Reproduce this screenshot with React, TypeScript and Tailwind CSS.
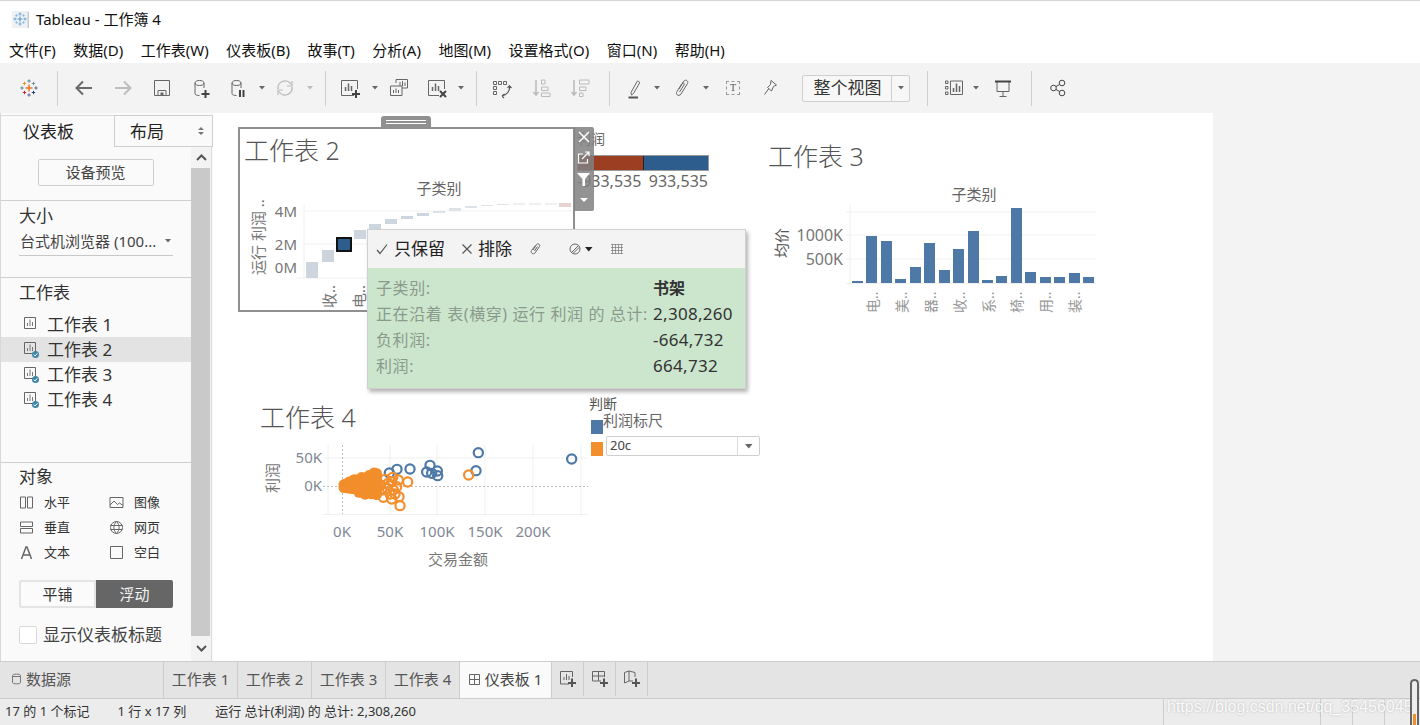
import React from "react";

const menus = ["文件(F)", "数据(D)", "工作表(W)", "仪表板(B)", "故事(T)", "分析(A)", "地图(M)", "设置格式(O)", "窗口(N)", "帮助(H)"];

function Cross({ x, y, s, c, w = 1.2 }: { x: number; y: number; s: number; c: string; w?: number }) {
    return (
        <path d={`M${x - s} ${y}H${x + s}M${x} ${y - s}V${y + s}`} stroke={c} strokeWidth={w} fill="none" />
    );
}

function TableauLogo() {
    return (
        <svg width="24" height="24" viewBox="0 0 24 24" className="shrink-0">
            <Cross x={12} y={12} s={3.5} c="#e8762b" w={1.5} />
            <Cross x={12} y={5} s={1.7} c="#5b879b" w={1} />
            <Cross x={12} y={19} s={1.7} c="#5b6591" w={1} />
            <Cross x={5} y={12} s={1.7} c="#59879b" w={1} />
            <Cross x={19} y={12} s={1.7} c="#5b6591" w={1} />
            <Cross x={7.5} y={7.5} s={1.7} c="#eb912b" w={1} />
            <Cross x={16.5} y={7.5} s={1.7} c="#7099a6" w={1} />
            <Cross x={7.5} y={16.5} s={1.7} c="#c72035" w={1} />
            <Cross x={16.5} y={16.5} s={1.7} c="#1f447e" w={1} />
        </svg>
    );
}

function TitleIcon() {
    return (
        <svg width="17" height="17" viewBox="0 0 17 17" className="shrink-0">
            <rect width="17" height="17" fill="#eef1f4" />
            <rect x="15.5" y="1" width="1.5" height="16" fill="#c9c9c9" />
            <Cross x={8} y={8} s={2.5} c="#5b9bd0" />
            <Cross x={8} y={3} s={1.6} c="#6fa8d8" w={1} />
            <Cross x={8} y={13} s={1.6} c="#6fa8d8" w={1} />
            <Cross x={3} y={8} s={1.6} c="#6fa8d8" w={1} />
            <Cross x={13} y={8} s={1.6} c="#6fa8d8" w={1} />
            <Cross x={4.5} y={4.5} s={1.3} c="#8dbbe0" w={0.9} />
            <Cross x={11.5} y={4.5} s={1.3} c="#8dbbe0" w={0.9} />
            <Cross x={4.5} y={11.5} s={1.3} c="#8dbbe0" w={0.9} />
            <Cross x={11.5} y={11.5} s={1.3} c="#8dbbe0" w={0.9} />
        </svg>
    );
}

function Caret({ className, color = "#666" }: { className?: string; color?: string }) {
    return (
        <svg width="8" height="24" viewBox="0 0 8 24" className={`shrink-0 ${className ?? ""}`}>
            <path d="M1 10H7L4 13.5Z" fill={color} />
        </svg>
    );
}

function Sep({ className }: { className: string }) {
    return <div className={`w-px h-[35px] bg-[#cfcfcf] shrink-0 ${className}`} />;
}

function Icon({ className, children }: { className: string; children: React.ReactNode }) {
    return (
        <svg width="24" height="24" viewBox="0 0 24 24" fill="none" stroke="#666" className={`shrink-0 ${className}`}>
            {children}
        </svg>
    );
}

function Toolbar() {
    return (
        <div className="h-[50px] bg-[#f3f3f3] flex items-center pl-[17px] shrink-0">
            <TableauLogo />
            <Sep className="ml-[16px]" />
            <Icon className="ml-[14px]">
                <path d="M20 12H5M11 5.5L4.5 12L11 18.5" strokeWidth="2" stroke="#6a6a6a" />
            </Icon>
            <Icon className="ml-[15px]">
                <path d="M4 12H19M13 5.5L19.5 12L13 18.5" strokeWidth="2" stroke="#bdbdbd" />
            </Icon>
            <Icon className="ml-[15px]">
                <path d="M4.5 4.5H19.5V19.5H4.5ZM8 19.5V14.5H16V19.5" strokeWidth="1" />
                <path d="M10.5 16.5H13.5V19H10.5Z" fill="#666" stroke="none" />
            </Icon>
            <Icon className="ml-[15px]">
                <path d="M6 7V17.5C6 19 8 19.5 10.5 19.5M6 7C6 5.2 8.5 4.5 10.5 4.5S15 5.2 15 7V12M6 7C6 8.8 8.5 9.5 10.5 9.5S15 8.8 15 7" strokeWidth="1" />
                <path d="M16.5 14V22M12.5 18H20.5" stroke="#444" strokeWidth="2" />
            </Icon>
            <Icon className="ml-[13px]">
                <path d="M6 7V17.5C6 19 8 19.5 10.5 19.5M6 7C6 5.2 8.5 4.5 10.5 4.5S15 5.2 15 7V12M6 7C6 8.8 8.5 9.5 10.5 9.5S15 8.8 15 7" strokeWidth="1" />
                <path d="M14 14V21M17.5 14V21" stroke="#444" strokeWidth="2" />
            </Icon>
            <Caret className="ml-[8px]" />
            <Icon className="ml-[7px]">
                <path d="M5 13A7 7 0 0 1 18 8.5M19 11A7 7 0 0 1 6 15.5" stroke="#bdbdbd" strokeWidth="1.5" />
                <path d="M19 5V10H14M5 19V14H10" stroke="#bdbdbd" strokeWidth="1.2" />
            </Icon>
            <Caret className="ml-[9px]" color="#bbb" />
            <Sep className="ml-[11px]" />
            <Icon className="ml-[12px]">
                <path d="M16 19.5H3.5V4.5H19.5V13" strokeWidth="1" />
                <path d="M7.5 15V11M10.5 15V7.5M13.5 15V10" strokeWidth="1.5" />
                <path d="M18 14V22M14 18H22" stroke="#444" strokeWidth="2" />
            </Icon>
            <Caret className="ml-[9px]" />
            <Icon className="ml-[8px]">
                <path d="M9 7V3.5H20.5V12H15M3.5 10H15V19.5H3.5Z" strokeWidth="1" />
                <path d="M13 6V10M15.5 5V10M18 6.5V10M6.5 17V14M9 17V12.5M11.5 17V14" strokeWidth="1" />
            </Icon>
            <Icon className="ml-[14px]">
                <path d="M14 19.5H3.5V4.5H19.5V13" strokeWidth="1" />
                <path d="M7.5 15V11M10.5 15V7.5M13.5 15V10" strokeWidth="1.5" />
                <path d="M15 15L21 21M21 15L15 21" stroke="#444" strokeWidth="2" />
            </Icon>
            <Caret className="ml-[8px]" />
            <Sep className="ml-[11px]" />
            <Icon className="ml-[13px]">
                <path d="M3.5 5.5H6.5V8.5H3.5ZM8.5 5.5H11.5V8.5H8.5ZM13.5 5.5H16.5V8.5H13.5ZM3.5 10.5H6.5V13.5H3.5ZM3.5 15.5H6.5V18.5H3.5Z" strokeWidth="1" />
                <path d="M19.5 10C20 15 17 19 12 20M19 9.5L21.5 12M19.5 9.5L17.5 12M12 20L14.5 18M12 20L14 22" strokeWidth="1.2" stroke="#555" />
            </Icon>
            <Icon className="ml-[16px]">
                <path d="M6 4V19M3.5 16L6 19L8.5 16" stroke="#bbb" strokeWidth="1.5" />
                <path d="M11.5 4H15V8H11.5ZM11.5 11H18V14.5H11.5ZM11.5 17H20V20.5H11.5Z" stroke="#bbb" strokeWidth="1" />
            </Icon>
            <Icon className="ml-[14px]">
                <path d="M6 4V19M3.5 16L6 19L8.5 16" stroke="#bbb" strokeWidth="1.5" />
                <path d="M11.5 4H21V8H11.5ZM11.5 11H18V14.5H11.5ZM11.5 17H15V20.5H11.5Z" stroke="#bbb" strokeWidth="1" />
            </Icon>
            <Sep className="ml-[17px]" />
            <Icon className="ml-[13px]">
                <path d="M8 16.5L14 5.5C14.5 4.5 17 5.5 16.5 7L10.5 17.5L8.5 19Z" strokeWidth="1" />
                <path d="M5.5 21.5H15" stroke="#555" strokeWidth="2" />
            </Icon>
            <Caret className="ml-[6px]" />
            <Icon className="ml-[9px]">
                <path d="M9 13L14 5C15.5 3 19 5 17.5 7.5L11 18C9 21 5 18.500 7 15.500L12 7.500C13 6 15 7.500 14 9L9.500 16" strokeWidth="1" />
            </Icon>
            <Caret className="ml-[8px]" />
            <div className="ml-[11px] w-[24px] h-[24px] flex items-center justify-center shrink-0">
                <div className="w-[14px] h-[14px] border border-dashed border-[#999] flex items-center justify-center text-[10px] leading-none text-[#555] [font-family:'Liberation_Serif',serif]">
                    T
                </div>
            </div>
            <Icon className="ml-[13px]">
                <path d="M13 4.500L18.500 9L15.500 10.500L13.500 15L9.500 11.500L12.500 8.500ZM10.500 13L6.500 18.500" strokeWidth="1" />
            </Icon>
            <div className="ml-[20px] w-[108px] h-[27px] rounded-[2px] border border-[#cfcfcf] bg-[#f7f7f7] flex items-center shrink-0">
                <span className="flex-1 text-center text-[17px] text-[#333] whitespace-nowrap pl-[1px]">整个视图</span>
                <div className="w-[18px] h-full border-l border-[#cfcfcf] flex items-center justify-center">
                    <Caret />
                </div>
            </div>
            <Sep className="ml-[17px]" />
            <Icon className="ml-[14px]">
                <path d="M3.500 5H6V7.500H3.500ZM3.500 10.500H6V13H3.500ZM3.500 16H6V18.500H3.500ZM8.500 5H20.500V18.500H8.500Z" strokeWidth="1" />
                <path d="M11.500 16V12M14.500 16V7.500M17.500 16V10" strokeWidth="1.500" />
            </Icon>
            <Caret className="ml-[6px]" />
            <Icon className="ml-[11px]">
                <path d="M4.500 5.500H19.500M6 5.500V15.500H18V5.500M12 15.500V20.500M8.500 20.500H15.500" strokeWidth="1" />
                <path d="M4 5.500H20" stroke="#444" strokeWidth="2" />
            </Icon>
            <Sep className="ml-[16px]" />
            <Icon className="ml-[14px]">
                <circle cx="7.500" cy="12" r="2.800" strokeWidth="1" stroke="#444" />
                <circle cx="16" cy="7" r="2.800" strokeWidth="1" stroke="#444" />
                <circle cx="16" cy="17" r="2.800" strokeWidth="1" stroke="#444" />
                <path d="M10 10.500L13.500 8.500M10 13.500L13.500 15.500" strokeWidth="1" stroke="#444" />
            </Icon>
        </div>
    );
}

function SheetIcon({ checked }: { checked?: boolean }) {
    return (
        <svg width="17" height="18" viewBox="0 0 17 18" fill="none" className="shrink-0">
            <path d="M1.500 1.500H12.500V12.500H1.500Z" stroke="#666" />
            <path d="M4.500 10V7M7 10V3.500M9.500 10V6" stroke="#777" />
            {checked && (
                <>
                    <circle cx="12.500" cy="13.500" r="3.500" fill="#3d87a8" />
                    <path d="M10.700 13.500L12.100 15L14.400 12.300" stroke="#fff" strokeWidth="1" />
                </>
            )}
        </svg>
    );
}

function ObjectItem({ icon, label }: { icon: React.ReactNode; label: string }) {
    return (
        <div className="flex items-center h-[25px] text-[13px] text-[#333]">
            <svg width="15" height="15" viewBox="0 0 15 15" fill="none" stroke="#666" className="shrink-0">
                {icon}
            </svg>
            <span className="ml-[10px]">{label}</span>
        </div>
    );
}

function Sidebar() {
    const sheets = ["工作表 1", "工作表 2", "工作表 3", "工作表 4"];
    return (
        <aside className="w-[213px] shrink-0 bg-[#fafafa] border-l border-[#d8d8d8] flex flex-col text-[#333]">
            <div className="h-[34px] pt-[2px] flex shrink-0 text-[17px]">
                <div className="w-[113px] pl-[22px] leading-[31px] border-t border-[#dcdcdc] text-[#222]">仪表板</div>
                <div className="flex-1 border border-[#cfcfcf] pl-[15px] leading-[29px] flex items-center text-[#222]">
                    布局
                    <svg width="8" height="10" viewBox="0 0 8 10" className="ml-auto mr-[7px]">
                        <path d="M1 4L4 1L7 4ZM1 6L4 9L7 6Z" fill="#777" />
                    </svg>
                </div>
            </div>
            <div className="flex-1 flex min-h-0">
                <div className="w-[190px] flex flex-col shrink-0">
                    <div className="h-[54px] border-b border-[#cfcfcf] pt-[12px] flex justify-center shrink-0 pr-[1px]">
                        <div className="w-[116px] h-[27px] border border-[#cfcfcf] rounded-[2px] text-[15px] text-[#444] flex items-center justify-center">
                            设备预览
                        </div>
                    </div>
                    <div className="h-[77px] border-b border-[#cfcfcf] pl-[18px] shrink-0">
                        <div className="text-[17px] leading-[20px] mt-[5px]">大小</div>
                        <div className="w-[154px] h-[29px] mt-[1px] border-b border-[#c8c8c8] flex items-center text-[15px] text-[#444] whitespace-nowrap pl-[1px]">
                            台式机浏览器 (100...
                            <Caret className="ml-auto mr-[1px]" />
                        </div>
                    </div>
                    <div className="h-[185px] border-b border-[#cfcfcf] shrink-0">
                        <div className="pl-[18px] text-[17px] leading-[20px] mt-[5px] mb-[9px]">工作表</div>
                        {sheets.map((s, i) => (
                            <div key={s} className={`h-[25px] flex items-center pl-[22px] text-[17px] ${i === 1 ? "bg-[#e3e3e3]" : ""}`}>
                                <SheetIcon checked={i > 0} />
                                <span className="ml-[7px]">{s}</span>
                            </div>
                        ))}
                    </div>
                    <div className="flex-1 pl-[18px]">
                        <div className="text-[17px] leading-[20px] mt-[4px]">对象</div>
                        <div className="grid grid-cols-[90px_90px] mt-[3px]">
                            <ObjectItem label="水平" icon={<path d="M1.500 2H6.500V13H1.500ZM8.500 2H13.500V13H8.500Z" />} />
                            <ObjectItem label="图像" icon={<path d="M1 2.500H14V12.500H1ZM1 10L5 6L8.500 9.500L10.500 8L14 10.500" />} />
                            <ObjectItem label="垂直" icon={<path d="M1.500 2H13.500V6.500H1.500ZM1.500 8.500H13.500V13H1.500Z" />} />
                            <ObjectItem label="网页" icon={<path d="M7.500 1.500A6 6 0 1 0 7.500 13.500A6 6 0 1 0 7.500 1.500ZM7.500 1.500C4 5 4 10 7.500 13.500C11 10 11 5 7.500 1.500ZM1.500 5.500H13.500M1.500 9.500H13.500" />} />
                            <ObjectItem label="文本" icon={<path d="M2.500 14L7 2H8L12.500 14M4.200 10H10.800" strokeWidth="1.500" />} />
                            <ObjectItem label="空白" icon={<path d="M1.500 1.500H13.500V13.500H1.500Z" />} />
                        </div>
                        <div className="flex w-[154px] h-[28px] mt-[15px] text-[15px]">
                            <div className="w-[77px] border-2 border-[#e4e4e4] rounded-l-[2px] bg-[#fbfbfb] flex items-center justify-center text-[#333]">平铺</div>
                            <div className="w-[77px] bg-[#666666] rounded-r-[2px] text-[#f2f2f2] flex items-center justify-center">浮动</div>
                        </div>
                        <div className="flex items-center mt-[14px] text-[17px] text-[#444] whitespace-nowrap">
                            <div className="w-[18px] h-[18px] border border-[#d8d8d8] bg-white rounded-[2px] shrink-0" />
                            <span className="ml-[6px]">显示仪表板标题</span>
                        </div>
                    </div>
                </div>
                <div className="w-[21px] flex flex-col shrink-0 bg-[#f3f3f3] border-r border-[#dcdcdc]">
                    <div className="h-[21px] flex items-center justify-center">
                        <svg width="11" height="7" viewBox="0 0 11 7" fill="none"><path d="M1 6L5.500 1.500L10 6" stroke="#555" strokeWidth="2" /></svg>
                    </div>
                    <div className="flex-1 bg-[#c9c9c9] w-[19px]" />
                    <div className="h-[25px] flex items-center justify-center">
                        <svg width="11" height="7" viewBox="0 0 11 7" fill="none"><path d="M1 1L5.500 5.500L10 1" stroke="#555" strokeWidth="2" /></svg>
                    </div>
                </div>
            </div>
        </aside>
    );
}

const sheet2Bars = [
    [306, 262, 278], [322, 250, 262], [338, 238, 251], [354, 230, 239], [369, 224, 229],
    [385, 219, 224], [401, 216, 219], [417, 213, 216], [433, 211, 213], [449, 208, 211],
    [465, 206, 208], [481, 205, 206], [497, 204, 205], [513, 203.500, 204.500], [529, 203.500, 204.500],
    [545, 203.500, 204.500], [559, 203, 207],
];

function Sheet2() {
    return (
        <div className="absolute left-[25px] top-[14px] w-[337px] h-[185px] bg-white border-2 border-[#909090] overflow-hidden">
            <div className="absolute left-[4px] top-[3px] text-[25px] leading-[36px] font-light text-[#555] whitespace-nowrap">工作表 2</div>
            <svg width="337" height="185" viewBox="0 0 337 185" className="block">
                <g transform="translate(-240 -129)">
                    <path d="M304 211H575M304 244H575M304 205V278M296 278H575" stroke="#f0f0f0" fill="none" />
                    {sheet2Bars.map(([x, t, b], i) => (
                        <rect key={i} x={x} y={t} width={12} height={b - t} fill={i === 16 ? "#e6d3cf" : i > 7 ? "#dde2e8" : "#cdd5df"} />
                    ))}
                    <rect x="337" y="238" width="14" height="13" fill="#2c5d8c" stroke="#111" strokeWidth="2" />
                    <g fontSize="14" fill="#777">
                        <text x="439" y="194" textAnchor="middle" fontSize="15" fill="#666">子类别</text>
                        <text x="297" y="217" textAnchor="end" fontSize="15">4M</text>
                        <text x="297" y="250" textAnchor="end" fontSize="15">2M</text>
                        <text x="297" y="273" textAnchor="end" fontSize="15">0M</text>
                        <text transform="translate(264 275) rotate(-90)" fontSize="15">运行 利润 ..</text>
                        <text transform="translate(335 308) rotate(-90)" fontSize="15">收..</text>
                        <text transform="translate(365 308) rotate(-90)" fontSize="15">电..</text>
                    </g>
                </g>
            </svg>
        </div>
    );
}

function SheetTools() {
    return (
        <div className="absolute left-[361px] top-[14px] w-[20px] h-[84px] bg-[#808080]/85 rounded-r-[2px] flex flex-col items-center">
            <svg width="20" height="84" viewBox="0 0 20 84" fill="none">
                <path d="M5 5L15 15M15 5L5 15" stroke="#fff" strokeWidth="1.500" />
                <path d="M9 27H4.500V36H13.500V32M8 32L15 25M11 25H15V29" stroke="#fff" strokeWidth="1.200" />
                <path d="M3 46H16L11 52V59H8.500V52Z" fill="#fff" />
                <path d="M6 71H14L10 75Z" fill="#fff" />
            </svg>
        </div>
    );
}

function Legend() {
    return (
        <div className="absolute left-[364px] top-[16px] w-[134px] text-[#666]">
            <div className="text-[14px] leading-[20px]">利润</div>
            <div className="flex h-[16px] mt-[6px] w-[132px] border border-[#9a9a9a]">
                <div className="w-[66px] bg-[#9c3e21] border-r border-[#222]" />
                <div className="flex-1 bg-[#2c5d8c]" />
            </div>
            <div className="flex justify-between text-[16px] leading-[22px] mt-[-1px] w-[131px] whitespace-nowrap">
                <span>-933,535</span>
                <span>933,535</span>
            </div>
        </div>
    );
}

function Tooltip() {
    const rows = [
        ["子类别:", "书架"],
        ["正在沿着 表(横穿) 运行 利润 的 总计:", "2,308,260"],
        ["负利润:", "-664,732"],
        ["利润:", "664,732"],
    ];
    return (
        <div className="absolute left-[154px] top-[116px] w-[379px] h-[160px] border border-[#d0d0d0] shadow-[2px_3px_4px_rgba(0,0,0,0.3)] bg-[#cce6cd] flex flex-col">
            <div className="h-[38px] bg-[#f3f3f3] flex items-center pl-[8px] text-[17px] text-[#222] shrink-0">
                <svg width="12" height="12" viewBox="0 0 12 12" fill="none"><path d="M1 7L4 10.500L11 1.500" stroke="#555" strokeWidth="1.200" /></svg>
                <span className="ml-[6px]">只保留</span>
                <svg width="12" height="12" viewBox="0 0 12 12" fill="none" className="ml-[16px]"><path d="M1.500 1.500L10.500 10.500M10.500 1.500L1.500 10.500" stroke="#555" strokeWidth="1.200" /></svg>
                <span className="ml-[5px]">排除</span>
                <svg width="12" height="14" viewBox="0 0 12 14" fill="none" className="ml-[17px]"><path d="M4 8L7.500 2.500C9 1 11.500 2.500 10.500 4.500L6 11C4.500 13 1 11 2.500 8.500L6.500 3.500M5.500 9L8.500 4.500" stroke="#666" /></svg>
                <svg width="12" height="12" viewBox="0 0 12 12" fill="none" className="ml-[28px]"><circle cx="6" cy="6" r="5" stroke="#666" /><path d="M2.500 9.500L9.500 2.500M4.500 10L10 4.500" stroke="#666" /></svg>
                <svg width="8" height="5" viewBox="0 0 8 5" className="ml-[4px]"><path d="M0 0H7.500L3.750 4.500Z" fill="#222" /></svg>
                <svg width="12" height="10" viewBox="0 0 12 10" fill="none" className="ml-[18px]"><path d="M0 .5H12M0 3.500H12M0 6.500H12M0 9.500H12M1.500 0V10M4.500 0V10M7.500 0V10M10.500 0V10" stroke="#777" strokeWidth=".7" /></svg>
            </div>
            <div className="pl-[8px] pt-[7px] text-[17px] leading-[26px] whitespace-nowrap">
                {rows.map(([k, v], i) => (
                    <div key={k} className="flex">
                        <span className="w-[277px] text-[#8a9a8c] text-[16px] tracking-[0.6px]">{k}</span>
                        {i === 0 ? (
                            <span className="font-bold text-[#333] ml-[-26px] pl-[26px] text-[16px]">{v}</span>
                        ) : (
                            <span className="text-[#333] tracking-[0.3px]">{v}</span>
                        )}
                    </div>
                ))}
            </div>
        </div>
    );
}

const sheet3Xs = [852, 866, 881, 895, 910, 924, 939, 953, 968, 982, 996, 1011, 1025, 1040, 1054, 1069, 1083];
const sheet3Tops = [281, 236, 241, 279, 267, 243, 270, 249, 231, 280, 276, 208, 272, 277, 277, 273, 277];
const sheet3Labels: [number, string][] = [[878, "电.."], [907, "美.."], [936, "器.."], [965, "收.."], [994, "系.."], [1022, "椅.."], [1051, "用.."], [1080, "装.."]];

function Sheet3() {
    return (
        <div className="absolute left-[555px] top-[25px] w-[340px] h-[190px]">
            <div className="absolute left-0 top-0 text-[25px] leading-[36px] font-light text-[#555] whitespace-nowrap">工作表 3</div>
            <svg width="340" height="190" viewBox="0 0 340 190" className="block">
                <g transform="translate(-768 -138)">
                    <path d="M846 212H1096M846 235H1096M846 259H1096M850 204V283M846 283.500H1096" stroke="#f0f0f0" fill="none" />
                    {sheet3Xs.map((x, i) => (
                        <rect key={x} x={x} y={sheet3Tops[i]} width={11} height={283 - sheet3Tops[i]} fill="#4e79a7" />
                    ))}
                    <g fill="#777">
                        <text x="974" y="200" textAnchor="middle" fontSize="15" fill="#666">子类别</text>
                        <text x="843" y="241" textAnchor="end" fontSize="16">1000K</text>
                        <text x="843" y="265" textAnchor="end" fontSize="16">500K</text>
                        <text transform="translate(787 258) rotate(-90)" fontSize="15" fill="#555">均价</text>
                        {sheet3Labels.map(([x, t]) => (
                            <text key={x} transform={`translate(${x} 313) rotate(-90)`} fontSize="14" fill="#999">{t}</text>
                        ))}
                    </g>
                </g>
            </svg>
        </div>
    );
}

const blueDots = [[685, 188], [965, 207], [480, 237], [441, 238], [418, 249], [540, 226], [530, 246], [545, 250], [562, 243], [563, 257], [678, 242]];
const orangeDots = [[656, 255], [473, 276], [450, 347], [447, 320], [425, 327], [400, 322], [378, 312], [345, 312], [445, 270], [430, 300], [420, 312], [440, 290], [428, 262], [415, 280], [435, 312], [395, 300], [425, 275], [405, 268], [392, 285], [412, 295], [380, 298], [365, 305]];

function denseDots() {
    const out: number[][] = [];
    for (let x = 344; x <= 378; x += 2.5) {
        const up = 2 + (x - 343) * 0.32;
        const down = 2 + (x - 343) * 0.2;
        for (let y = 486 - up; y <= 486 + down; y += 3) {
            out.push([x, y + ((x * 7 + y * 13) % 3) - 1]);
        }
    }
    return out;
}

function Sheet4() {
    const dense = denseDots();
    return (
        <div className="absolute left-[47px] top-[286px] w-[345px] h-[180px]">
            <div className="absolute left-0 top-0 text-[25px] leading-[36px] font-light text-[#555] whitespace-nowrap">工作表 4</div>
            <svg width="345" height="180" viewBox="0 0 345 180" className="block">
                <g transform="translate(-260 -399)">
                    <path d="M323 458H588M323 514.500H588M328 445V514M390 445V514M437 445V514M485 445V514M533 445V514M581 445V514" stroke="#f0f0f0" fill="none" />
                    <path d="M323 486.500H588M342.500 445V514" stroke="#bdbdbd" strokeDasharray="2 2" fill="none" />
                    {blueDots.map(([x, y], i) => (
                        <circle key={i} cx={250 + x / 3} cy={390 + y / 3} r="4.600" fill="none" stroke="#4e79a7" strokeWidth="2.200" />
                    ))}
                    {orangeDots.map(([x, y], i) => (
                        <circle key={i} cx={250 + x / 3} cy={390 + y / 3} r="4.600" fill="none" stroke="#f28e2b" strokeWidth="2.200" />
                    ))}
                    {dense.map(([x, y], i) => (
                        <circle key={i} cx={x} cy={y} r="5.500" fill="#f28e2b" />
                    ))}
                    <g fill="#7f8894" fontSize="15">
                        <text x="322" y="463" textAnchor="end">50K</text>
                        <text x="322" y="491" textAnchor="end">0K</text>
                        <text x="342" y="537" textAnchor="middle">0K</text>
                        <text x="390" y="537" textAnchor="middle">50K</text>
                        <text x="437" y="537" textAnchor="middle">100K</text>
                        <text x="485" y="537" textAnchor="middle">150K</text>
                        <text x="533" y="537" textAnchor="middle">200K</text>
                    </g>
                    <text x="458" y="565" textAnchor="middle" fontSize="15" fill="#777">交易金额</text>
                    <text transform="translate(278 493) rotate(-90)" fontSize="15" fill="#777">利润</text>
                </g>
            </svg>
        </div>
    );
}

function ScaleLegend() {
    return (
        <div className="absolute left-[376px] top-[282px] w-[172px] h-[62px] text-[#666] whitespace-nowrap">
            <div className="text-[14px] leading-[18px] text-[#555]">判断</div>
            <div className="flex mt-[-3px] items-start">
                <div className="w-[12px] h-[14px] bg-[#4e79a7] mt-[10px] ml-[2px] shrink-0" />
                <span className="text-[15px] leading-[20px]">利润标尺</span>
            </div>
            <div className="flex items-end mt-[2px]">
                <div className="w-[12px] h-[14px] bg-[#f28e2b] ml-[2px] shrink-0" />
                <div className="ml-[3px] w-[154px] h-[20px] bg-white border border-[#cfcfcf] rounded-[2px] flex items-center text-[13px] text-[#444] pl-[3px]">
                    20c
                    <div className="ml-auto w-[22px] h-full border-l border-[#d8d8d8] flex items-center justify-center">
                        <svg width="8" height="5" viewBox="0 0 8 5"><path d="M0 0H7.500L3.750 4.500Z" fill="#666" /></svg>
                    </div>
                </div>
            </div>
        </div>
    );
}

function Canvas() {
    return (
        <div className="relative w-[1000px] bg-white shrink-0">
            <Legend />
            <Sheet3 />
            <Sheet4 />
            <ScaleLegend />
            <div className="absolute left-[168px] top-[3px] w-[50px] h-[11px] bg-[#909090] rounded-t-[3px] flex flex-col gap-[2px] items-center justify-center">
                <div className="w-[40px] h-px bg-white" />
                <div className="w-[40px] h-px bg-white" />
            </div>
            <Sheet2 />
            <SheetTools />
            <Tooltip />
        </div>
    );
}

function AddTab({ children }: { children: React.ReactNode }) {
    return (
        <div className="w-[32px] border-r border-[#cdcdcd] flex items-center justify-center shrink-0">
            <svg width="20" height="20" viewBox="0 0 20 20" fill="none" stroke="#666">
                {children}
                <path d="M14 9.500V18M10 14H18" stroke="#555" strokeWidth="2" />
            </svg>
        </div>
    );
}

function Tabs() {
    return (
        <div className="h-[37px] bg-[#e4e4e4] border-t border-[#cdcdcd] flex text-[15px] text-[#555] shrink-0 pb-[2px]">
            <div className="w-[164px] border-r border-[#cdcdcd] mb-[-2px] pb-[2px] flex items-center pl-[12px] shrink-0">
                <svg width="9" height="12" viewBox="0 0 9 12" fill="none"><path d="M.5 2.500C.5 .7 8.500 .7 8.500 2.500V9.500C8.500 11.300 .5 11.300 .5 9.500ZM.5 3.500H8.500" stroke="#777" /></svg>
                <span className="ml-[5px]">数据源</span>
            </div>
            {["工作表 1", "工作表 2", "工作表 3", "工作表 4"].map(t => (
                <div key={t} className="w-[74px] border-r border-[#cdcdcd] mb-[-2px] pb-[2px] flex items-center justify-center shrink-0">{t}</div>
            ))}
            <div className="w-[92px] bg-[#fafafa] border-r border-[#cdcdcd] mb-[-2px] pb-[2px] flex items-center justify-center text-[#444] shrink-0">
                <svg width="11" height="11" viewBox="0 0 11 11" fill="none" className="mr-[5px]"><path d="M.5 .5H10.500V10.500H.5ZM5.500 .5V10.500M.5 5.500H10.500" stroke="#666" /></svg>
                仪表板 1
            </div>
            <AddTab>
                <path d="M11 15H2.500V2.500H14.500V8M6 11V8M8.500 11V5M11 11V7" />
            </AddTab>
            <AddTab>
                <path d="M11 12H2.500V2.500H14.500V8M8.500 2.500V12M2.500 7H14.500" />
            </AddTab>
            <AddTab>
                <path d="M2.500 3.500L7 2V12L2.500 14ZM7 2L13 3.500V8M7 12H11" />
            </AddTab>
        </div>
    );
}

function StatusBar() {
    return (
        <div className="relative h-[27px] bg-[#ececec] border-t border-[#cdcdcd] flex items-center text-[13px] text-[#333] whitespace-nowrap shrink-0">
            <span className="ml-[5px]">17 的 1 个标记</span>
            <span className="ml-[28px]">1 行 x 17 列</span>
            <span className="ml-[29px]">运行 总计(利润) 的 总计: 2,308,260</span>
            <div className="absolute left-[1163px] top-0 h-full w-[258px] flex">
                <div className="w-[157px] border-l border-[#cdcdcd]" />
                <div className="w-[32px] border-l border-[#cdcdcd]" />
                <div className="w-[32px] border-l border-[#cdcdcd]" />
                <div className="flex-1 border-l border-[#cdcdcd]" />
            </div>
            <span className="absolute left-[1167px] top-[-1px] text-[16px] leading-[17px] text-white/90 [font-family:'Liberation_Sans',sans-serif] [text-shadow:0_0_2px_rgba(120,120,120,0.5)]">
                https://blog.csdn.net/qq_35456045
            </span>
        </div>
    );
}

export default function App() {
    return (
        <div className="relative w-[1420px] h-[725px] overflow-hidden flex flex-col bg-white [font-family:'Noto_Sans','Noto_Sans_CJK_SC',sans-serif]">
            <div className="h-[38px] border-t border-[#d4d4d4] flex items-center pl-[12px] shrink-0">
                <TitleIcon />
                <span className="ml-[7px] text-[15px] text-[#111]">Tableau - 工作簿 4</span>
            </div>
            <div className="h-[25px] flex items-center pl-[9px] gap-[17.500px] text-[15px] text-[#111] shrink-0 whitespace-nowrap">
                {menus.map(m => (
                    <span key={m}>{m}</span>
                ))}
            </div>
            <Toolbar />
            <div className="flex-1 flex min-h-0 bg-[#f3f3f3]">
                <Sidebar />
                <Canvas />
            </div>
            <Tabs />
            <StatusBar />
            <div className="absolute left-[1410px] top-[679px] w-[9px] h-[46px] border-2 border-b-0 border-[#666] rounded-t-[5px] bg-[#eeeeee] flex flex-col justify-end items-center">
                <div className="w-[3px] h-[11px] bg-[#f28e2b]" />
            </div>
        </div>
    );
}
